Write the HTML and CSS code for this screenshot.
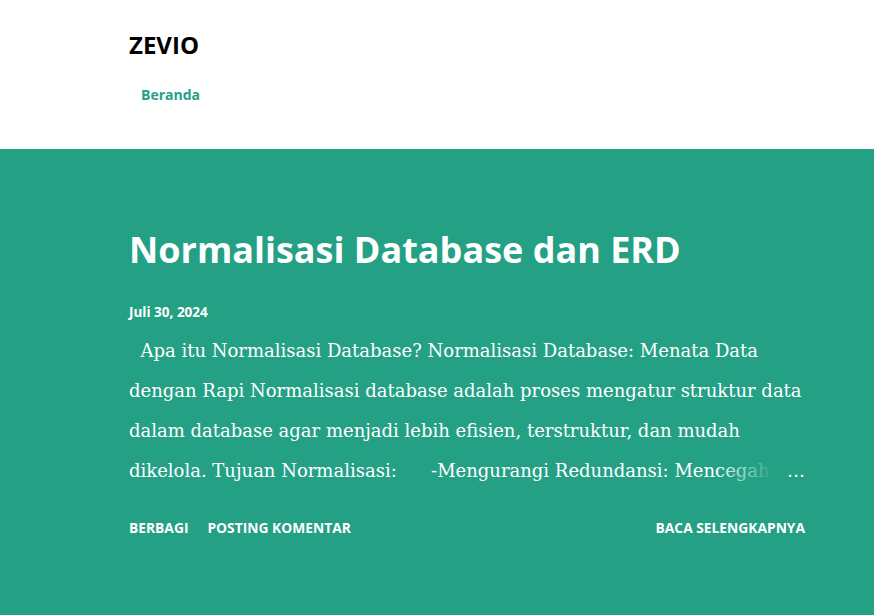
FILE: index.html
```html
<!DOCTYPE html>
<html lang="id">
<head>
<meta charset="utf-8">
<title>ZEVIO</title>
<link rel="stylesheet" href="styles.css">
</head>
<body>
<header class="site-header">
  <div class="wrap">
    <h1 class="brand">ZEVIO</h1>
    <nav class="nav"><a class="nav-link" href="#">Beranda</a></nav>
  </div>
</header>
<main class="hero">
  <article class="wrap post">
    <h2 class="post-title">Normalisasi Database dan ERD</h2>
    <div class="post-date">Juli 30, 2024</div>
    <div class="snippet">
      <p class="snippet-text">&nbsp; Apa itu Normalisasi Database? Normalisasi Database: Menata Data dengan Rapi Normalisasi database adalah proses mengatur struktur data dalam database agar menjadi lebih efisien, terstruktur, dan mudah dikelola. Tujuan Normalisasi: &nbsp; &nbsp; &nbsp;-Mengurangi Redundansi: Mencegah</p>
      <span class="fade"></span>
      <span class="ellipsis">…</span>
    </div>
    <div class="post-actions">
      <div class="actions-left">
        <a class="action" href="#">Berbagi</a>
        <a class="action" href="#">Posting Komentar</a>
      </div>
      <a class="action" href="#">Baca selengkapnya</a>
    </div>
  </article>
</main>
</body>
</html>
```
FILE: styles.css
```css
* { box-sizing: border-box; }
html, body { margin: 0; padding: 0; }
body {
  font-family: "Open Sans", "Noto Sans", sans-serif;
  background: #24a085;
  color: #fff;
}
.wrap {
  width: 676px;
  margin-left: 129px;
}
.site-header {
  background: #fff;
  height: 149px;
  padding-top: 28px;
}
.brand {
  margin: 0;
  font-size: 24px;
  line-height: 33px;
  font-weight: 700;
  color: #000;
}
.nav {
  margin-top: 22px;
  padding-left: 12px;
}
.nav-link {
  font-size: 14px;
  font-weight: 700;
  color: #24a085;
  text-decoration: none;
  line-height: 20px;
}
.hero {
  height: 466px;
  padding-top: 77px;
}
.post-title {
  margin: 0;
  font-size: 36px;
  line-height: 48px;
  font-weight: 700;
  color: #fff;
}
.post-date {
  margin-top: 29px;
  font-size: 13.5px;
  font-weight: 700;
  line-height: 18px;
}
.snippet {
  position: relative;
  margin-top: 10px;
  height: 160px;
  overflow: hidden;
}
.snippet-text {
  margin: 0;
  font-family: "DejaVu Serif", "Liberation Serif", serif;
  font-size: 18px;
  line-height: 40px;
  color: #fff;
}
.fade {
  position: absolute;
  right: 30px;
  bottom: 0;
  width: 60px;
  height: 40px;
  background: linear-gradient(to right, rgba(36,160,133,0) 0%, #24a085 100%);
}
.ellipsis {
  position: absolute;
  right: 0;
  bottom: 0;
  width: 30px;
  text-align: right;
  font-family: "DejaVu Serif", serif;
  font-size: 18px;
  line-height: 40px;
  background: #24a085;
}
.post-actions {
  margin-top: 27px;
  display: flex;
  justify-content: space-between;
  align-items: center;
}
.actions-left {
  display: flex;
  gap: 19px;
}
.action {
  color: #fff;
  text-decoration: none;
  text-transform: uppercase;
  font-size: 13.8px;
  font-weight: 700;
  line-height: 20px;
}
```
